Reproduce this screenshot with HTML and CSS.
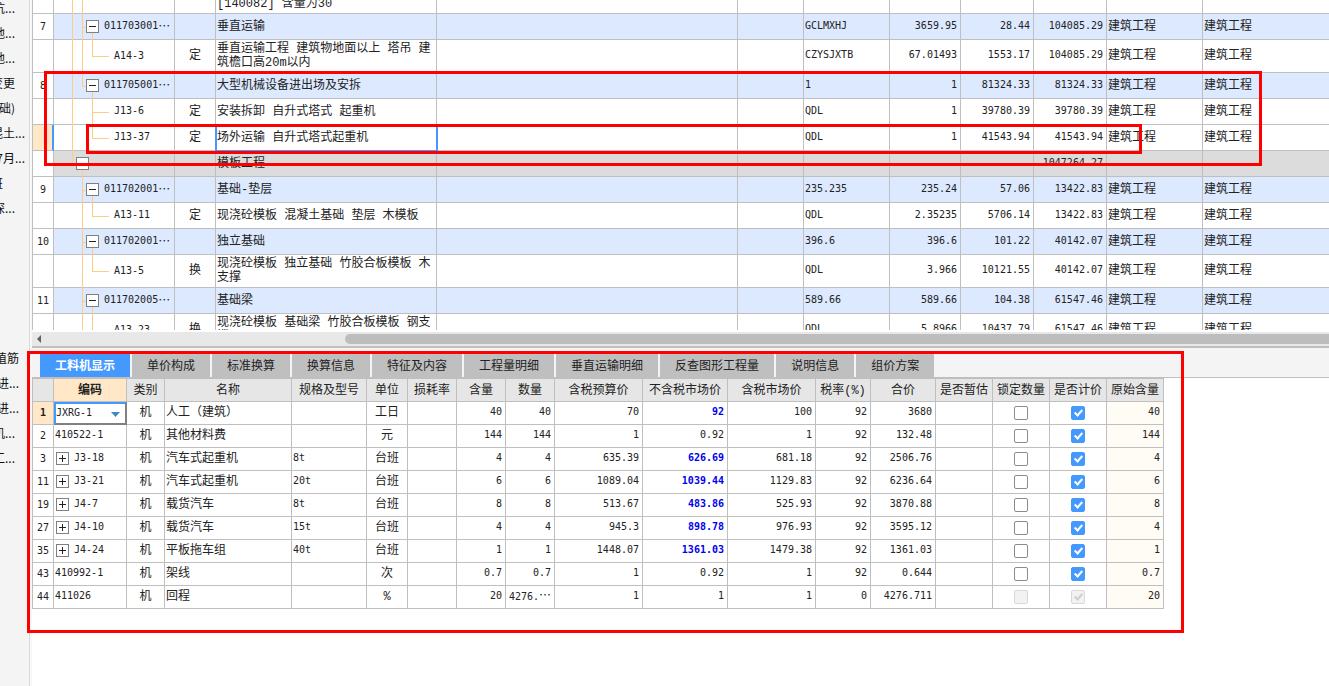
FILE: index.html
```html
<!DOCTYPE html>
<html lang="zh-CN">
<head>
<meta charset="utf-8">
<title>工料机显示</title>
<link rel="stylesheet" href="styles.css">
</head>
<body>
<div class="app">
  <nav class="side">
    <ul class="side-list">
      <li class="e15">坑...</li><li class="e15">地...</li><li class="e15">地...</li><li class="e15">变更</li><li class="e15">基础)</li><li class="e6">混土...</li><li class="e6">7月...</li><li class="e27">班</li><li class="e15">深...</li>
    </ul>
    <ul class="side-list second">
      <li class="e11">植筋</li><li class="e11">进...</li><li class="e11">进...</li><li class="e15">机...</li><li class="e15">工...</li>
    </ul>
  </nav>
  <main class="main">
    <section class="quota-pane">
      <table class="quota">
        <colgroup><col class="w22"><col class="w121"><col class="w41"><col class="w221"><col class="w301"><col class="w66"><col class="w86"><col class="w71"><col class="w73"><col class="w73"><col class="w96"><col></colgroup>
        <tbody>
        <tr class="cut"><td></td><td class="tree ga gb"></td><td></td><td><div class="tail">[140082] 含量为30</div></td><td></td><td></td><td></td><td></td><td></td><td></td><td></td><td></td></tr>
        <tr class="item"><td>7</td><td class="tree ga gb gc open"><div class="node"><button class="box" aria-label="折叠"><svg viewBox="0 0 13 13"><path d="M3 6.5h7"/></svg></button>011703001<span class="dots">…</span></div></td><td></td><td>垂直运输</td><td></td><td></td><td>GCLMXHJ</td><td>3659.95</td><td>28.44</td><td>104085.29</td><td>建筑工程</td><td>建筑工程</td></tr>
        <tr class="tall"><td></td><td class="tree ga gb last"><div class="leaf">A14-3</div></td><td>定</td><td>垂直运输工程 建筑物地面以上 塔吊 建筑檐口高20m以内</td><td></td><td></td><td>CZYSJXTB</td><td>67.01493</td><td>1553.17</td><td>104085.29</td><td>建筑工程</td><td>建筑工程</td></tr>
        <tr class="item"><td>8</td><td class="tree ga gb-top gc open"><div class="node"><button class="box" aria-label="折叠"><svg viewBox="0 0 13 13"><path d="M3 6.5h7"/></svg></button>011705001<span class="dots">…</span></div></td><td></td><td>大型机械设备进出场及安拆</td><td></td><td></td><td>1</td><td>1</td><td>81324.33</td><td>81324.33</td><td>建筑工程</td><td>建筑工程</td></tr>
        <tr><td></td><td class="tree ga mid"><div class="leaf">J13-6</div></td><td>定</td><td>安装拆卸 自升式塔式 起重机</td><td></td><td></td><td>QDL</td><td>1</td><td>39780.39</td><td>39780.39</td><td>建筑工程</td><td>建筑工程</td></tr>
        <tr class="current"><td></td><td class="tree ga last"><div class="leaf">J13-37</div></td><td>定</td><td class="picked">场外运输 自升式塔式起重机</td><td></td><td></td><td>QDL</td><td>1</td><td>41543.94</td><td>41543.94</td><td>建筑工程</td><td>建筑工程</td></tr>
        <tr class="group"><td></td><td class="tree ga-top gb-low"><div class="node outer"><button class="box" aria-label="折叠"><svg viewBox="0 0 13 13"><path d="M3 6.5h7"/></svg></button></div></td><td></td><td>模板工程</td><td></td><td></td><td></td><td></td><td></td><td>1047264.27</td><td></td><td></td></tr>
        <tr class="item"><td>9</td><td class="tree gb gc open"><div class="node"><button class="box" aria-label="折叠"><svg viewBox="0 0 13 13"><path d="M3 6.5h7"/></svg></button>011702001<span class="dots">…</span></div></td><td></td><td>基础-垫层</td><td></td><td></td><td>235.235</td><td>235.24</td><td>57.06</td><td>13422.83</td><td>建筑工程</td><td>建筑工程</td></tr>
        <tr><td></td><td class="tree gb last"><div class="leaf">A13-11</div></td><td>定</td><td>现浇砼模板 混凝土基础 垫层 木模板</td><td></td><td></td><td>QDL</td><td>2.35235</td><td>5706.14</td><td>13422.83</td><td>建筑工程</td><td>建筑工程</td></tr>
        <tr class="item"><td>10</td><td class="tree gb gc open"><div class="node"><button class="box" aria-label="折叠"><svg viewBox="0 0 13 13"><path d="M3 6.5h7"/></svg></button>011702001<span class="dots">…</span></div></td><td></td><td>独立基础</td><td></td><td></td><td>396.6</td><td>396.6</td><td>101.22</td><td>40142.07</td><td>建筑工程</td><td>建筑工程</td></tr>
        <tr class="tall"><td></td><td class="tree gb last"><div class="leaf">A13-5</div></td><td>换</td><td>现浇砼模板 独立基础 竹胶合板模板 木支撑</td><td></td><td></td><td>QDL</td><td>3.966</td><td>10121.55</td><td>40142.07</td><td>建筑工程</td><td>建筑工程</td></tr>
        <tr class="item"><td>11</td><td class="tree gb gc open"><div class="node"><button class="box" aria-label="折叠"><svg viewBox="0 0 13 13"><path d="M3 6.5h7"/></svg></button>011702005<span class="dots">…</span></div></td><td></td><td>基础梁</td><td></td><td></td><td>589.66</td><td>589.66</td><td>104.38</td><td>61547.46</td><td>建筑工程</td><td>建筑工程</td></tr>
        <tr class="tall"><td></td><td class="tree gb last"><div class="leaf">A13-23</div></td><td>换</td><td>现浇砼模板 基础梁 竹胶合板模板 钢支撑</td><td></td><td></td><td>QDL</td><td>5.8966</td><td>10437.79</td><td>61547.46</td><td>建筑工程</td><td>建筑工程</td></tr>
        </tbody>
      </table>
    </section>
    <div class="scroll">
      <button class="scroll-left" aria-label="向左滚动"><svg viewBox="0 0 4 8"><path d="M4 0v8L0 4z"/></svg></button>
      <div class="thumb"></div>
    </div>
    <div class="tabs" role="tablist">
      <button class="tab on" role="tab" aria-selected="true">工料机显示</button>
      <button class="tab" role="tab">单价构成</button>
      <button class="tab" role="tab">标准换算</button>
      <button class="tab" role="tab">换算信息</button>
      <button class="tab" role="tab">特征及内容</button>
      <button class="tab" role="tab">工程量明细</button>
      <button class="tab" role="tab">垂直运输明细</button>
      <button class="tab" role="tab">反查图形工程量</button>
      <button class="tab" role="tab">说明信息</button>
      <button class="tab" role="tab">组价方案</button>
    </div>
    <section class="res-pane">
      <table class="res">
        <colgroup><col class="w22"><col class="w73"><col class="w38"><col class="w127"><col class="w75"><col class="w41"><col class="w49"><col class="w49"><col class="w49"><col class="w88"><col class="w85"><col class="w88"><col class="w55"><col class="w65"><col class="w57"><col class="w57"><col class="w57"><col class="w57"></colgroup>
        <thead>
        <tr><th></th><th class="hot">编码</th><th>类别</th><th>名称</th><th>规格及型号</th><th>单位</th><th>损耗率</th><th>含量</th><th>数量</th><th>含税预算价</th><th>不含税市场价</th><th>含税市场价</th><th>税率(%)</th><th>合价</th><th>是否暂估</th><th>锁定数量</th><th>是否计价</th><th>原始含量</th></tr>
        </thead>
        <tbody>
        <tr><td class="hot">1</td><td class="edit"><div class="combo"><select aria-label="编码"><option>JXRG-1</option></select><svg viewBox="0 0 9 5"><path d="M0 0h9L4.500 5z"/></svg></div></td><td>机</td><td>人工（建筑）</td><td></td><td>工日</td><td></td><td>40</td><td>40</td><td>70</td><td class="mod">92</td><td>100</td><td>92</td><td>3680</td><td></td><td><input type="checkbox" aria-label="锁定数量"></td><td><input type="checkbox" aria-label="是否计价" checked></td><td>40</td></tr>
        <tr><td>2</td><td>410522-1</td><td>机</td><td>其他材料费</td><td></td><td>元</td><td></td><td>144</td><td>144</td><td>1</td><td>0.92</td><td>1</td><td>92</td><td>132.48</td><td></td><td><input type="checkbox" aria-label="锁定数量"></td><td><input type="checkbox" aria-label="是否计价" checked></td><td>144</td></tr>
        <tr><td>3</td><td><div class="fold"><button class="box" aria-label="展开"><svg viewBox="0 0 13 13"><path d="M3 6.5h7M6.500 3v7"/></svg></button>J3-18</div></td><td>机</td><td>汽车式起重机</td><td>8t</td><td>台班</td><td></td><td>4</td><td>4</td><td>635.39</td><td class="mod">626.69</td><td>681.18</td><td>92</td><td>2506.76</td><td></td><td><input type="checkbox" aria-label="锁定数量"></td><td><input type="checkbox" aria-label="是否计价" checked></td><td>4</td></tr>
        <tr><td>11</td><td><div class="fold"><button class="box" aria-label="展开"><svg viewBox="0 0 13 13"><path d="M3 6.5h7M6.500 3v7"/></svg></button>J3-21</div></td><td>机</td><td>汽车式起重机</td><td>20t</td><td>台班</td><td></td><td>6</td><td>6</td><td>1089.04</td><td class="mod">1039.44</td><td>1129.83</td><td>92</td><td>6236.64</td><td></td><td><input type="checkbox" aria-label="锁定数量"></td><td><input type="checkbox" aria-label="是否计价" checked></td><td>6</td></tr>
        <tr><td>19</td><td><div class="fold"><button class="box" aria-label="展开"><svg viewBox="0 0 13 13"><path d="M3 6.5h7M6.500 3v7"/></svg></button>J4-7</div></td><td>机</td><td>载货汽车</td><td>8t</td><td>台班</td><td></td><td>8</td><td>8</td><td>513.67</td><td class="mod">483.86</td><td>525.93</td><td>92</td><td>3870.88</td><td></td><td><input type="checkbox" aria-label="锁定数量"></td><td><input type="checkbox" aria-label="是否计价" checked></td><td>8</td></tr>
        <tr><td>27</td><td><div class="fold"><button class="box" aria-label="展开"><svg viewBox="0 0 13 13"><path d="M3 6.5h7M6.500 3v7"/></svg></button>J4-10</div></td><td>机</td><td>载货汽车</td><td>15t</td><td>台班</td><td></td><td>4</td><td>4</td><td>945.3</td><td class="mod">898.78</td><td>976.93</td><td>92</td><td>3595.12</td><td></td><td><input type="checkbox" aria-label="锁定数量"></td><td><input type="checkbox" aria-label="是否计价" checked></td><td>4</td></tr>
        <tr><td>35</td><td><div class="fold"><button class="box" aria-label="展开"><svg viewBox="0 0 13 13"><path d="M3 6.5h7M6.500 3v7"/></svg></button>J4-24</div></td><td>机</td><td>平板拖车组</td><td>40t</td><td>台班</td><td></td><td>1</td><td>1</td><td>1448.07</td><td class="mod">1361.03</td><td>1479.38</td><td>92</td><td>1361.03</td><td></td><td><input type="checkbox" aria-label="锁定数量"></td><td><input type="checkbox" aria-label="是否计价" checked></td><td>1</td></tr>
        <tr><td>43</td><td>410992-1</td><td>机</td><td>架线</td><td></td><td>次</td><td></td><td>0.7</td><td>0.7</td><td>1</td><td>0.92</td><td>1</td><td>92</td><td>0.644</td><td></td><td><input type="checkbox" aria-label="锁定数量"></td><td><input type="checkbox" aria-label="是否计价" checked></td><td>0.7</td></tr>
        <tr><td>44</td><td>411026</td><td>机</td><td>回程</td><td></td><td>%</td><td></td><td>20</td><td>4276.<span class="dots">…</span></td><td>1</td><td>1</td><td>1</td><td>0</td><td>4276.711</td><td></td><td><input type="checkbox" aria-label="锁定数量" disabled></td><td><input type="checkbox" aria-label="是否计价" checked disabled></td><td>20</td></tr>
        </tbody>
      </table>
    </section>
  </main>
  <div class="mark mark-group"></div>
  <div class="mark mark-row"></div>
  <div class="mark mark-detail"></div>
</div>
</body>
</html>
```
FILE: styles.css
```css
* { box-sizing: border-box; }
body { margin: 0; }
:root {
  --line: #bfbfbf;
  --blue: #4499ff;
  --guide: #ffcc88;
  --text: "Liberation Mono", "Noto Sans CJK SC", monospace;
  --num: "DejaVu Sans Mono", "Noto Sans CJK SC", monospace;
}
button, select, input { margin: 0; padding: 0; border: 0; color: inherit; font: inherit; }
.app {
  position: relative;
  display: grid;
  grid-template-columns: 30px minmax(0, 1fr);
  min-height: 100vh;
  overflow: hidden;
  background: #fff;
  color: #222;
  font: 12px/14px var(--text);
}

/* Project tree, scrolled to the right */
.side {
  overflow: hidden;
  border-right: 1px solid #d9d9d9;
  background: #f4f4f4;
  color: #111;
  font: 12px/25px "Noto Sans CJK SC", sans-serif;
}
.side-list { margin: -5px 0 0; padding: 0; list-style: none; }
.side-list.second { margin-top: 125px; }
.side-list li { display: flex; justify-content: flex-end; height: 25px; white-space: nowrap; }
.e6 { padding-right: 4px; }
.e11 { padding-right: 10px; }
.e15 { padding-right: 14px; }
.e27 { padding-right: 26px; }

.main { display: flex; flex-direction: column; min-width: 0; border-left: 2px solid #f8f8f8; }
.quota-pane, .res-pane { overflow: hidden; }
.quota-pane { height: 330px; }

table { table-layout: fixed; border-collapse: separate; border-spacing: 0; }
td, th {
  padding: 0 3px 0 1px;
  border-right: 1px solid var(--line);
  border-bottom: 1px solid var(--line);
  text-align: left;
  font-weight: 400;
}
td:first-child, th:first-child {
  padding: 0;
  border-left: 1px solid var(--line);
  text-align: center;
}
td:first-child { font: 10px/14px var(--num); }
.w22 { width: 22px; } .w38 { width: 38px; } .w41 { width: 41px; } .w49 { width: 49px; }
.w55 { width: 55px; } .w57 { width: 57px; } .w65 { width: 65px; } .w66 { width: 66px; }
.w71 { width: 71px; } .w73 { width: 73px; } .w75 { width: 75px; } .w85 { width: 85px; }
.w86 { width: 86px; } .w88 { width: 88px; } .w96 { width: 96px; } .w121 { width: 121px; }
.w127 { width: 127px; } .w221 { width: 221px; } .w301 { width: 301px; }

/* Bill of quantities */
.quota { width: 100%; }
.quota tr { height: 26px; }
.quota .tall { height: 33px; }
.quota .cut { height: 14px; }
.cut td { vertical-align: top; }
.tail { height: 8px; line-height: 8px; }
.quota td:nth-child(3) { padding: 0; text-align: center; }
.quota td:nth-child(2),
.quota td:nth-child(n+7):nth-child(-n+10) { padding-bottom: 2px; font: 10px/14px var(--num); }
.quota td:nth-child(n+8):nth-child(-n+10) { text-align: right; }
.quota td:last-child { border-right: 0; }
.item td:not(:first-child) { background-color: #dce9fe; }
.group td:not(:first-child) { background-color: #dcdcdc; }
.current td:first-child { border-right: 2px solid var(--blue); background: #ffe7c8; }
.quota .picked { outline: 2px solid var(--blue); outline-offset: -1px; }

/* Tree guides: outer line, inner line, inner elbow, child line, child elbow, row rule */
.quota td.tree:nth-child(2) {
  padding: 0 0 2px;
  border-bottom: 0;
  background-image:
    linear-gradient(var(--guide), var(--guide)), linear-gradient(var(--guide), var(--guide)),
    linear-gradient(var(--guide), var(--guide)), linear-gradient(var(--guide), var(--guide)),
    linear-gradient(var(--guide), var(--guide)), linear-gradient(var(--line), var(--line));
  background-repeat: no-repeat;
  background-position: 18px 0, 28px var(--bp), 28px 50%, 38px var(--dp), 38px 50%, 0 100%;
  background-size: 1px var(--a), 1px var(--b), var(--c) 1px, 1px var(--d), var(--e) 1px, 100% 1px;
}
.tree { --a: 0; --b: 0; --bp: 0; --c: 0; --d: 0; --dp: 0; --e: 0; }
.tree.ga { --a: 100%; }
.tree.ga-top { --a: 50%; }
.tree.gb { --b: 100%; }
.tree.gb-top { --b: 50%; }
.tree.gb-low { --b: 50%; --bp: 100%; }
.tree.gc { --c: 4px; }
.tree.open { --d: 50%; --dp: 100%; }
.tree.mid { --d: 100%; --e: 17px; }
.tree.last { --d: 50%; --e: 17px; }
.node, .fold { display: flex; align-items: center; white-space: nowrap; }
.node { padding-left: 32px; }
.node.outer { padding-left: 22px; }
.leaf { padding-left: 60px; }
.box {
  flex: none;
  width: 13px;
  height: 13px;
  margin-right: 5px;
  border: 1px solid #808080;
  background: #fff;
}
.box svg { display: block; width: 13px; height: 13px; margin: -1px; fill: none; stroke: #222; }
.dots { font: 12px/14px "Noto Sans CJK SC", sans-serif; }

.scroll {
  display: flex;
  align-items: center;
  height: 18px;
  border-top: 2px solid #fff;
  border-bottom: 2px solid var(--line);
  background: #e8e8e8;
}
.scroll-left { width: 13px; height: 14px; padding-left: 5px; background: none; }
.scroll-left svg { display: block; width: 4px; height: 8px; fill: #606060; }
.thumb { flex: 1; height: 10px; margin-left: 300px; border-radius: 5px 0 0 5px; background: #bdbdbd; }

.tabs {
  display: flex;
  gap: 2px;
  padding: 6px 0 0 8px;
  border-bottom: 1px solid var(--line);
  background: #f4f4f4;
}
.tab { height: 23px; padding: 0 15px 1px; background: #bfbfbf; font: 12px/22px "Noto Sans CJK SC", sans-serif; white-space: nowrap; }
.tab.on { background: var(--blue); color: #fff; font-weight: 700; }

/* Labour, material and machine list */
.res { width: 1132px; }
.res tr { height: 23px; }
.res thead tr { height: 24px; }
.res th { padding: 2px 0 0; border-top: 1px solid var(--line); background: #e6e6e6; text-align: center; white-space: nowrap; }
.res .hot { background: #ffe7c8; font-weight: 700; }
.res td { white-space: nowrap; }
.res td:nth-child(2), .res td:nth-child(5), .res td:nth-child(n+8) { padding-bottom: 2px; font: 10px/14px var(--num); }
.res td:nth-child(3), .res td:nth-child(6) { padding: 0; text-align: center; }
.res td:nth-child(n+8) { padding-left: 0; text-align: right; }
.res td:nth-child(16), .res td:nth-child(17) { padding: 0; text-align: center; }
.res td:last-child { background: #fffbf5; }
.res td.mod:nth-child(11) { color: #0000ee; font-weight: 700; }
.fold { padding-left: 1px; }
.fold .box { margin-right: 5px; }
.res td.edit:nth-child(2) { padding: 0; border: 0; }
.combo {
  position: relative;
  height: 23px;
  border: 2px solid #808080;
  border-top-color: var(--blue);
  border-left-color: var(--blue);
}
.combo select { display: block; width: 100%; height: 19px; padding-bottom: 2px; appearance: none; background: #fff; }
.combo svg { position: absolute; top: 8px; right: 5px; width: 9px; height: 5px; fill: #3a8ac4; pointer-events: none; }

input[type="checkbox"] {
  display: block;
  width: 14px;
  height: 14px;
  margin: 0 auto;
  appearance: none;
  border: 1px solid #8c8c8c;
  border-radius: 2px;
  background: #fff;
}
input[type="checkbox"]:checked { border-color: var(--blue); background: var(--blue); }
input[type="checkbox"]:checked::after {
  content: "";
  display: block;
  width: 3px;
  height: 6px;
  margin: 1px 0 0 4px;
  border: solid #fff;
  border-width: 0 2px 2px 0;
  transform: rotate(42deg);
}
input[type="checkbox"]:checked:disabled::after { border-color: #cfcfcf; }
input[type="checkbox"]:disabled { border-color: #d9d9d9; background: #f2f2f2; }

/* Red callouts drawn over the window */
.mark { position: absolute; border: 3px solid #f00; pointer-events: none; }
.mark-group { left: 44px; top: 71px; width: 1218px; height: 95px; }
.mark-row { left: 86px; top: 124px; width: 1056px; height: 30px; }
.mark-detail { left: 27px; top: 351px; width: 1157px; height: 282px; }
```
